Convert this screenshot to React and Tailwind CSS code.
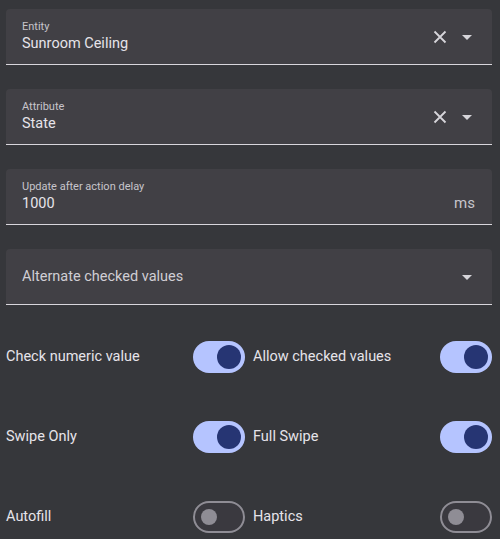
import React from "react";

const font = { fontFamily: "Roboto, 'Noto Sans', sans-serif" };

function ClearIcon() {
  return (
    <svg width="14" height="14" viewBox="0 0 14 14" className="text-[#d6d5da]">
      <path d="M1.5 1.5 L12.5 12.5 M12.5 1.5 L1.5 12.5" stroke="currentColor" strokeWidth="1.8" fill="none" />
    </svg>
  );
}

function Caret() {
  return (
    <svg width="10" height="5" viewBox="0 0 10 5" className="text-[#d6d5da]">
      <path d="M0 0 L10 0 L5 5 Z" fill="currentColor" />
    </svg>
  );
}

function Field({ label, value, clear, caret, suffix, placeholder }) {
  return (
    <div className="h-14 rounded-t-[4px] bg-[#414045] border-b border-[#d8d6dc] flex items-center pl-4 pr-5">
      <div className="flex-1 min-w-0">
        {label && <div className="text-[11px] leading-[14px] text-[#c7c5cb]">{label}</div>}
        {value && <div className="text-[14.5px] leading-[20px] text-[#e6e4ea]">{value}</div>}
        {placeholder && <div className="text-[14.5px] leading-[20px] text-[#d0ced4]">{placeholder}</div>}
      </div>
      {suffix && <div className="text-[15px] text-[#c7c5cb] mt-[14px] mr-[-3px]">{suffix}</div>}
      {clear && <div className="mr-[15px] flex items-center"><ClearIcon /></div>}
      {caret && <div className="flex items-center mt-[2px]"><Caret /></div>}
    </div>
  );
}

function Switch({ on }) {
  if (on) {
    return (
      <div className="w-[52px] h-8 rounded-full bg-[#b5c4ff] flex items-center justify-end pr-1 shrink-0">
        <div className="w-6 h-6 rounded-full bg-[#263573]" />
      </div>
    );
  }
  return (
    <div className="w-[52px] h-8 rounded-full bg-[#3a393f] border-2 border-[#8f8d95] flex items-center pl-[6px] shrink-0">
      <div className="w-4 h-4 rounded-full bg-[#8f8d95]" />
    </div>
  );
}

function ToggleRow({ label, on }) {
  return (
    <div className="flex items-center justify-between h-8">
      <span className="text-[14.5px] text-[#e6e4ea]">{label}</span>
      <Switch on={on} />
    </div>
  );
}

export default function App() {
  return (
    <div className="w-[500px] h-[539px] bg-[#36373b] overflow-hidden px-[6px] pt-[9px] pr-[8px]" style={font}>
      <div className="flex flex-col gap-6">
        <Field label="Entity" value="Sunroom Ceiling" clear caret />
        <Field label="Attribute" value="State" clear caret />
        <Field label="Update after action delay" value="1000" suffix="ms" />
        <Field placeholder="Alternate checked values" caret />
      </div>
      <div className="grid grid-cols-2 gap-x-2 gap-y-12 mt-[36px]">
        <ToggleRow label="Check numeric value" on />
        <ToggleRow label="Allow checked values" on />
        <ToggleRow label="Swipe Only" on />
        <ToggleRow label="Full Swipe" on />
        <ToggleRow label="Autofill" on={false} />
        <ToggleRow label="Haptics" on={false} />
      </div>
    </div>
  );
}
